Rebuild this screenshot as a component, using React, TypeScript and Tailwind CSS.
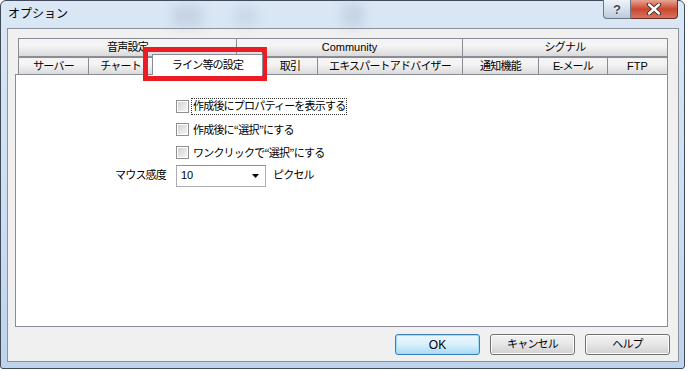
import React from "react";

const F = "font-['Liberation_Sans','Noto_Sans_CJK_JP',sans-serif]";
const J = "text-[11px] tracking-[-0.8px]";
const Q = "font-['Noto_Sans_CJK_JP',sans-serif]";

function Tab({ w, label, first, latin }: { w: number; label: string; first?: boolean; latin?: boolean }) {
  return (
    <div
      className={`flex h-full items-center justify-center border border-b-0 border-[#898c95] bg-gradient-to-b from-[#f4f4f4] from-40% to-[#dadada] text-black ${latin ? "text-[11px]" : J} ${first ? "" : "-ml-px"}`}
      style={{ width: w }}
    >
      {label}
    </div>
  );
}

function Check({ label, focus }: { label: React.ReactNode; focus?: boolean }) {
  return (
    <div className="flex h-[23px] items-center">
      <div className="flex h-[13px] w-[13px] items-center justify-center border border-[#8e8f8f] bg-white">
        <div className="h-[9px] w-[9px] bg-gradient-to-br from-[#d2d2d2] to-[#f6f6f6]" />
      </div>
      <span
        className={`ml-[2px] px-[1px] leading-[15px] text-black ${J} ${focus ? "border border-dotted border-[#333]" : "border border-transparent"}`}
      >
        {label}
      </span>
    </div>
  );
}

function Btn({ label, def, latin }: { label: string; def?: boolean; latin?: boolean }) {
  return (
    <div
      className={`flex h-[21px] w-[85px] items-center justify-center rounded-[3px] border text-black ${latin ? "text-[12px]" : J} ${
        def
          ? "border-[#3c7fb1] bg-gradient-to-b from-[#eaf6fd] via-[#d9f0fc] to-[#a7d9f5] shadow-[inset_0_0_0_1px_#9fdcf8]"
          : "border-[#707070] bg-gradient-to-b from-[#f2f2f2] via-[#e6e6e6] to-[#d0d0d0] shadow-[inset_0_0_0_1px_#fcfcfc]"
      }`}
    >
      {label}
    </div>
  );
}

export default function App() {
  return (
    <div className={`relative h-[371px] w-[688px] overflow-hidden bg-white ${F}`}>
      <div className="flex h-[369px] w-[685px] flex-col rounded-t-[6px] rounded-b-[3px] border border-[#3f4a5a] bg-gradient-to-b from-[#dbe7f5] via-[#cddff2] to-[#bfd3ec] pl-[6px] pr-[5px] pb-[6px]">
        {/* Title bar */}
        <div className="relative flex h-[27px] items-start">
          <div className="pointer-events-none absolute left-[165px] top-[4px] h-[22px] w-[30px] bg-[#8a9bb2] opacity-25 blur-[6px]" />
          <div className="pointer-events-none absolute left-[228px] top-[6px] h-[18px] w-[22px] bg-[#8a9bb2] opacity-20 blur-[6px]" />
          <div className="pointer-events-none absolute left-[335px] top-[2px] h-[24px] w-[22px] bg-[#8a9bb2] opacity-25 blur-[6px]" />
          <span className="relative ml-[1px] mt-[5px] text-[12px] leading-[16px] text-black">オプション</span>
          <div className="flex-1" />
          <div className="relative -mt-px mr-px flex h-[19px]">
            <div className="flex h-[19px] w-[28px] items-center justify-center rounded-bl-[4px] border border-t-0 border-[#6a7789] bg-gradient-to-b from-[#eef3f9] via-[#d6e0ec] to-[#bccadb]">
              <span className="text-[13px] font-bold leading-none text-[#3d4654] [text-shadow:0_0_2px_#fff,0_0_1px_#fff]">?</span>
            </div>
            <div className="flex h-[19px] w-[47px] items-center justify-center rounded-br-[4px] border border-l-0 border-t-0 border-[#6b2a22] bg-gradient-to-b from-[#e8a493] via-[#c9462f] to-[#d6745f]">
              <svg width="16" height="12" viewBox="0 0 16 12">
                <path d="M3 1.5 L13 10.5 M13 1.5 L3 10.5" stroke="#3b2320" strokeWidth="4.2" strokeLinecap="round" />
                <path d="M3 1.5 L13 10.5 M13 1.5 L3 10.5" stroke="#ffffff" strokeWidth="2.4" strokeLinecap="round" />
              </svg>
            </div>
          </div>
        </div>

        {/* Client area */}
        <div className="flex flex-1 flex-col border border-[#8a929d] bg-[#f0f0f0]">
          {/* tab rows */}
          <div className="ml-[10px] mt-[9px] flex h-[19px]">
            <div className={`flex h-[19px] w-[219px] items-center justify-center border border-[#898c95] bg-gradient-to-b from-[#f4f4f4] from-40% to-[#dadada] ${J}`}>音声設定</div>
            <div className="-ml-px flex h-[19px] w-[227px] items-center justify-center border border-[#898c95] bg-gradient-to-b from-[#f4f4f4] from-40% to-[#dadada] text-[11px]">Community</div>
            <div className={`-ml-px flex h-[19px] w-[206px] items-center justify-center border border-[#898c95] bg-gradient-to-b from-[#f4f4f4] from-40% to-[#dadada] ${J}`}>シグナル</div>
          </div>
          <div className="ml-[10px] flex h-[17px] items-end">
            <Tab w={71} label="サーバー" first />
            <Tab w={65} label="チャート" />
            <div className={`relative z-10 -mb-px -ml-px flex h-[21px] w-[111px] items-center justify-center border border-b-0 border-[#898c95] bg-white text-black ${J}`}>
              ライン等の設定
            </div>
            <Tab w={56} label="取引" />
            <Tab w={146} label="エキスパートアドバイザー" />
            <Tab w={77} label="通知機能" />
            <Tab w={70} label="E-メール" />
            <Tab w={61} label="FTP" latin />
          </div>
          {/* panel */}
          <div className="ml-[7px] flex h-[253px] w-[653px] flex-col border border-[#898c95] bg-white pt-[20px]">
            <div className="ml-[160px] flex flex-col">
              <Check label="作成後にプロパティーを表示する" focus />
              <Check
                label={
                  <>
                    作成後に<span className={Q}>“</span>選択<span className={Q}>”</span>にする
                  </>
                }
              />
              <Check
                label={
                  <>
                    ワンクリックで<span className={Q}>“</span>選択<span className={Q}>”</span>にする
                  </>
                }
              />
            </div>
            <div className="flex h-[23px] items-center">
              <span className={`w-[150px] text-right text-black ${J}`}>マウス感度</span>
              <div className="ml-[10px] flex h-[22px] w-[90px] items-center border border-[#abadb3] border-t-[#8e8f8f] bg-white pl-[4px] pr-[6px]">
                <span className="flex-1 text-[11px] text-black">10</span>
                <svg width="7" height="4" viewBox="0 0 7 4">
                  <path d="M0 0 H7 L3.5 4 Z" fill="#000" />
                </svg>
              </div>
              <span className={`ml-[7px] text-black ${J}`}>ピクセル</span>
            </div>
          </div>
          {/* buttons */}
          <div className="mt-[7px] flex justify-end gap-[10px] pr-[8px]">
            <Btn label="OK" def latin />
            <Btn label="キャンセル" />
            <Btn label="ヘルプ" />
          </div>
        </div>
      </div>

      {/* red annotation box */}
      <div className="absolute left-[143px] top-[47px] h-[34px] w-[124px] border-[5px] border-[#ec1c24]" />
    </div>
  );
}
